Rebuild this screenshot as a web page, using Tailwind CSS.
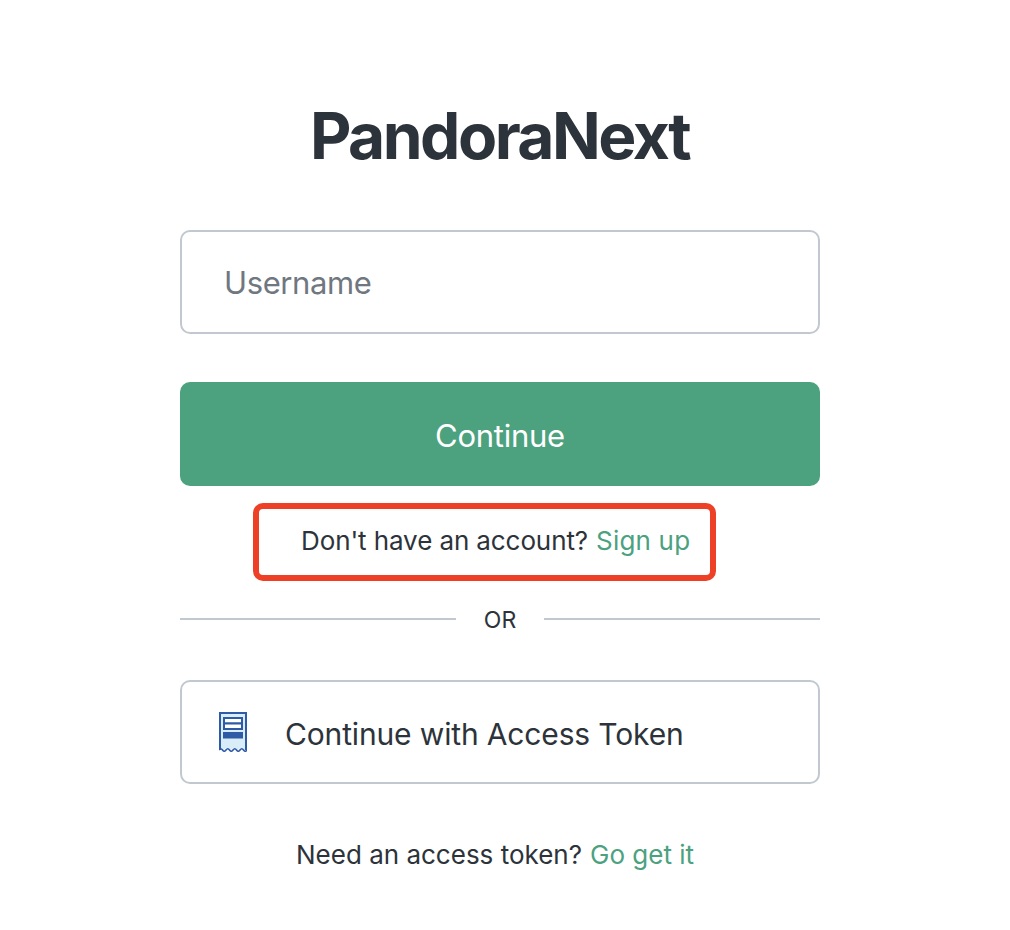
<!DOCTYPE html>
<html lang="en">
<head>
<meta charset="utf-8">
<title>PandoraNext</title>
<script src="https://cdn.jsdelivr.net/npm/@tailwindcss/browser@4"></script>
</head>
<body class="bg-white font-['Inter',sans-serif] text-[#2d333a]">
  <div class="w-[1010px] h-[930px] overflow-hidden pl-[180px] pt-[96px]">
    <div class="w-[640px]">
      <h1 class="h-[80px] pr-[1px] text-center text-[64px] leading-[80px] font-bold tracking-[-2.5px]">PandoraNext</h1>

      <!-- Username -->
      <div class="mt-[54px] flex h-[104px] items-center rounded-[10px] border-2 border-[#c2c8d0] pl-[42px] pt-[3px] text-[31px] tracking-[-0.4px] text-[#6f7780]">Username</div>

      <!-- Continue -->
      <button class="mt-[48px] block h-[104px] w-full rounded-[10px] bg-[#4ca17f] pt-[5px] text-[31px] tracking-[-0.25px] text-white">Continue</button>

      <!-- Sign up -->
      <div class="ml-[73px] mt-[17px] flex h-[78px] w-[463px] items-center rounded-[10px] border-[6px] border-[#ee4026] pb-[4px] pl-[42px] text-[26px]">
        <span class="tracking-[-0.1px]">Don't have an account?</span>
        <a class="ml-[8px] tracking-[0.2px] text-[#4ca17f]">Sign up</a>
      </div>

      <!-- Divider -->
      <div class="mt-[25px] flex h-[26px] items-center">
        <div class="h-[2px] flex-1 bg-[#c2c8d0]"></div>
        <span class="w-[88px] pt-[2px] text-center text-[23px]">OR</span>
        <div class="h-[2px] flex-1 bg-[#c2c8d0]"></div>
      </div>

      <!-- Access token -->
      <button class="mt-[48px] flex h-[104px] w-full items-center rounded-[10px] border-2 border-[#c2c8d0] pl-[37px] text-[30px] tracking-[-0.15px]">
        <svg class="h-[40px] w-[28px]" viewBox="0 0 28 40" xmlns="http://www.w3.org/2000/svg">
          <path d="M1 1H27V37Q25.2 39 23.5 37T20 37 16.5 37 13 37 9.5 37 6 37 2.5 37 1 37Z" fill="#d9edf9"/>
          <path d="M1 38V1H27V38" fill="none" stroke="#2e5aa6" stroke-width="2"/>
          <path d="M0 38Q1.75 35.5 3.5 38T7 38 10.500 38 14 38 17.500 38 21 38 24.500 38 28 38" fill="none" stroke="#2e5aa6" stroke-width="1.6"/>
          <rect x="5" y="6" width="18" height="5.500" fill="#fff" stroke="#2e5aa6" stroke-width="2"/>
          <rect x="5" y="11.500" width="18" height="5.500" fill="#fff" stroke="#2e5aa6" stroke-width="2"/>
          <rect x="4" y="20" width="20" height="6.500" fill="#2e5aa6"/>
        </svg>
        <span class="ml-[38px] pt-[5px]">Continue with Access Token</span>
      </button>

      <!-- Footer -->
      <div class="ml-[116px] mt-[51px] flex text-[26px]">
        <span>Need an access token?</span>
        <a class="ml-[8px] text-[#4ca17f]">Go get it</a>
      </div>
    </div>
  </div>
</body>
</html>
